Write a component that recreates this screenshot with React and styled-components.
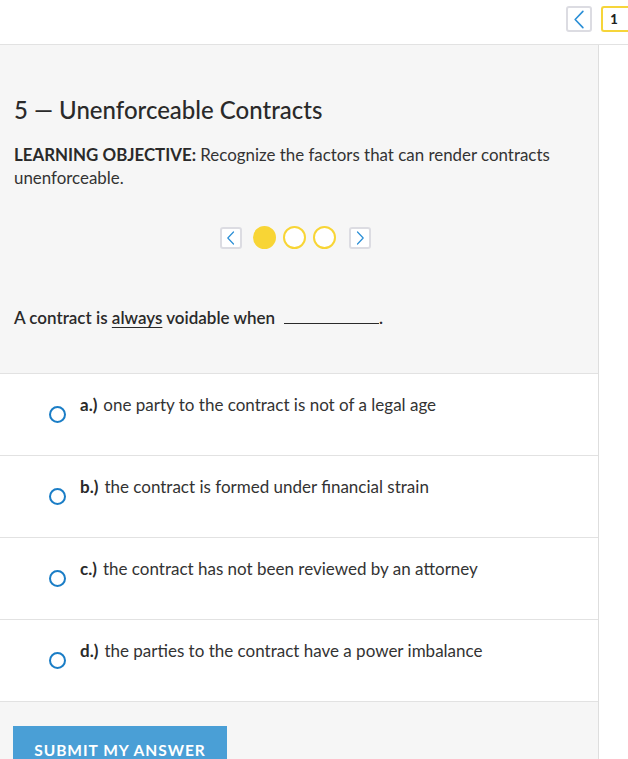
import React, { useState } from 'react';
import styled, { createGlobalStyle } from 'styled-components';

const GlobalStyle = createGlobalStyle`
  html, body {
    margin: 0;
    padding: 0;
    background: #ffffff;
    font-family: Lato, "Open Sans", Arial, sans-serif;
    color: #2b2b2b;
    overflow: hidden;
  }
  * {
    box-sizing: border-box;
  }
`;

const TopBar = styled.div`
  height: 45px;
  display: flex;
  justify-content: flex-end;
  align-items: flex-start;
  gap: 9px;
  padding-top: 6px;
  border-bottom: 1px solid #e2e2e2;
`;

const IconBox = styled.button`
  width: ${({ size }) => size}px;
  height: ${({ size }) => size}px;
  border: 2px solid #dcdce2;
  border-radius: 3px;
  background: #fff;
  display: flex;
  align-items: center;
  justify-content: center;
  padding: 0;
  cursor: pointer;
  flex-shrink: 0;
`;

const PageBox = styled.div`
  width: 27px;
  height: 26px;
  border: 2px solid #f6d53a;
  border-right: none;
  border-radius: 3px 0 0 3px;
  display: flex;
  align-items: center;
  justify-content: center;
  font-weight: 900;
  font-size: 13px;
  color: #222;
  padding-right: 3px;
`;

const Body = styled.div`
  display: flex;
  height: calc(100vh - 45px);
`;

const Main = styled.div`
  width: 599px;
  border-right: 1px solid #dedede;
  display: flex;
  flex-direction: column;
`;

const Side = styled.div`
  flex: 1;
`;

const Intro = styled.section`
  flex-shrink: 0;
  background: #f6f6f6;
  padding: 51px 14px 44px 14px;
  border-bottom: 1px solid #e2e2e2;
`;

const Title = styled.h1`
  margin: 0;
  font-size: 24px;
  line-height: 28px;
  font-weight: 500;
  color: #2a2a2a;
`;

const Objective = styled.p`
  margin: 19px 0 0 0;
  font-size: 16.9px;
  line-height: 23px;
  color: #333;
  strong {
    font-weight: 700;
    color: #2a2a2a;
  }
`;

const Pager = styled.div`
  margin-top: 37px;
  display: flex;
  align-items: center;
  justify-content: center;
  gap: 7px;
  padding-right: 8px;
`;

const Dots = styled.div`
  display: flex;
  gap: 7px;
  margin: 0 6px 0 4px;
`;

const Dot = styled.span`
  width: 23px;
  height: 23px;
  border-radius: 50%;
  border: 2px solid #f8d535;
  background: ${({ active }) => (active ? '#f8d535' : '#ffffff')};
`;

const Question = styled.p`
  margin: 57px 0 0 0;
  font-size: 17px;
  line-height: 23px;
  font-weight: 600;
  color: #2a2a2a;
  u {
    text-decoration-thickness: 1px;
    text-underline-offset: 3px;
  }
`;

const Blank = styled.span`
  display: inline-block;
  width: 95px;
  height: 16px;
  margin-left: 9px;
  border-bottom: 1px solid #2a2a2a;
  vertical-align: baseline;
`;

const Option = styled.label`
  flex-shrink: 0;
  height: 82px;
  display: flex;
  align-items: flex-start;
  padding: 19px 0 0 49px;
  border-bottom: 1px solid #e2e2e2;
  background: #fff;
  cursor: pointer;
`;

const Radio = styled.span`
  width: 17px;
  height: 17px;
  margin-top: 13px;
  border-radius: 50%;
  border: 2px solid #1a7dc6;
  background: ${({ checked }) => (checked ? 'radial-gradient(circle, #1a7dc6 40%, #fff 45%)' : '#fff')};
  flex-shrink: 0;
`;

const OptionText = styled.span`
  margin-left: 14px;
  font-size: 17px;
  line-height: 23px;
  color: #333;
  b {
    font-weight: 700;
    color: #2a2a2a;
    margin-right: 6px;
  }
`;

const Footer = styled.div`
  flex: 1;
  background: #f6f6f6;
  padding: 24px 13px 0 13px;
`;

const Submit = styled.button`
  width: 214px;
  height: 48px;
  border: none;
  background: #4a9fd6;
  color: #fff;
  font-family: inherit;
  font-size: 15.5px;
  font-weight: 700;
  letter-spacing: 1px;
  text-transform: uppercase;
  padding: 14px 0 0 0;
  display: flex;
  align-items: flex-start;
  justify-content: center;
  line-height: 20px;
  cursor: pointer;
`;

const Chevron = ({ dir = 'left', size = 14 }) => (
  <svg width={size} height={size} viewBox="0 0 14 14" fill="none">
    <path
      d={dir === 'left' ? 'M9.5 1 L3.8 7 L9.5 13' : 'M4.5 1 L10.2 7 L4.5 13'}
      stroke="#2b8fd6"
      strokeWidth="1.2"
      strokeLinecap="round"
      strokeLinejoin="round"
    />
  </svg>
);

const options = [
  { key: 'a', text: 'one party to the contract is not of a legal age' },
  { key: 'b', text: 'the contract is formed under financial strain' },
  { key: 'c', text: 'the contract has not been reviewed by an attorney' },
  { key: 'd', text: 'the parties to the contract have a power imbalance' },
];

export default function App() {
  const [selected, setSelected] = useState(null);
  return (
    <>
      <GlobalStyle />
      <TopBar>
        <IconBox size={26}>
          <Chevron dir="left" size={19} />
        </IconBox>
        <PageBox>1</PageBox>
      </TopBar>
      <Body>
        <Main>
          <Intro>
            <Title>5 — Unenforceable Contracts</Title>
            <Objective>
              <strong>LEARNING OBJECTIVE:</strong> Recognize the factors that can render contracts
              unenforceable.
            </Objective>
            <Pager>
              <IconBox size={22}>
                <Chevron dir="left" size={14} />
              </IconBox>
              <Dots>
                <Dot active />
                <Dot />
                <Dot />
              </Dots>
              <IconBox size={22}>
                <Chevron dir="right" size={14} />
              </IconBox>
            </Pager>
            <Question>
              A contract is <u>always</u> voidable when<Blank />.
            </Question>
          </Intro>
          {options.map((o) => (
            <Option key={o.key} onClick={() => setSelected(o.key)}>
              <Radio checked={selected === o.key} />
              <OptionText>
                <b>{o.key}.)</b>
                {o.text}
              </OptionText>
            </Option>
          ))}
          <Footer>
            <Submit>Submit my answer</Submit>
          </Footer>
        </Main>
        <Side />
      </Body>
    </>
  );
}
